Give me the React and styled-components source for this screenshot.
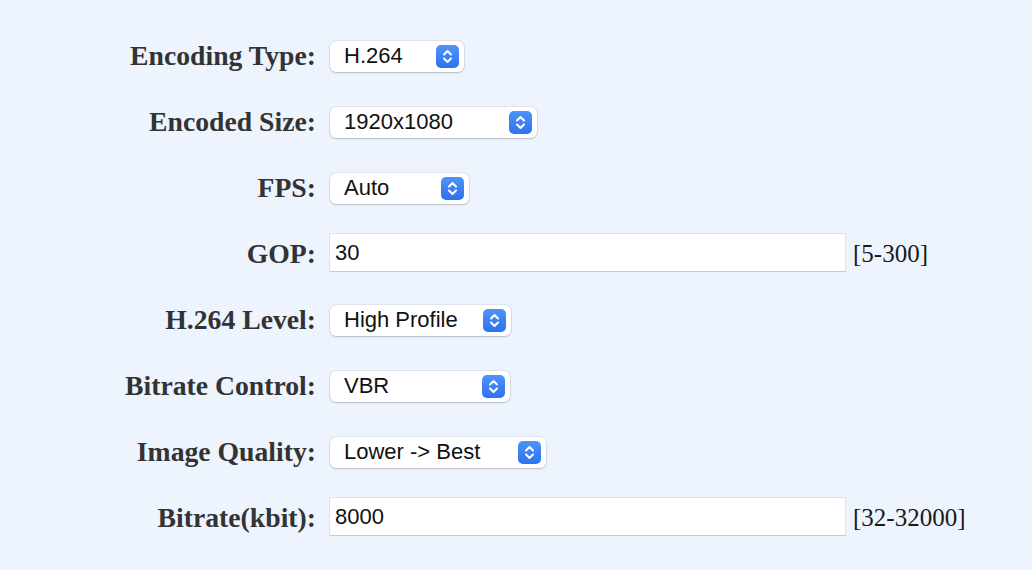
import React from 'react';
import styled, { createGlobalStyle } from 'styled-components';

const GlobalStyle = createGlobalStyle`
  html, body {
    margin: 0;
    padding: 0;
    background-color: #edf4fe;
  }
`;

const Page = styled.div`
  width: 1032px;
  height: 570px;
  background-color: #edf4fe;
  overflow: hidden;
`;

const Form = styled.div`
  display: grid;
  grid-template-columns: 316px 530px auto;
  grid-auto-rows: 66px;
  padding-top: 23px;
  align-items: center;
`;

const Label = styled.label`
  font-family: "Liberation Serif", "Times New Roman", serif;
  font-weight: bold;
  font-size: 27.7px;
  color: #333;
  text-align: right;
  white-space: nowrap;
`;

const Cell = styled.div`
  display: flex;
  align-items: center;
  padding-left: ${(p) => p.$gap || 0}px;
`;

const SelectBox = styled.div`
  box-sizing: border-box;
  width: ${(p) => p.$width}px;
  height: 31px;
  margin-left: 1px;
  padding: 0 5px 0 14px;
  display: flex;
  align-items: center;
  justify-content: space-between;
  background: #fff;
  border-radius: 6px;
  box-shadow: 0 0 0 0.5px rgba(0, 0, 0, 0.12), 0 1px 2px rgba(0, 0, 0, 0.18);
  font-family: "Liberation Sans", Arial, sans-serif;
  font-size: 22px;
  color: #111;
`;

const Arrow = styled.span`
  width: 23px;
  height: 23px;
  border-radius: 5px;
  background: linear-gradient(#4f93f8, #2d72ef);
  display: flex;
  align-items: center;
  justify-content: center;
`;

const TextInput = styled.input`
  box-sizing: border-box;
  flex: none;
  width: 517px;
  height: 39px;
  margin-bottom: 3px;
  padding: 0 5px;
  border: 1px solid #dfe3ea;
  border-bottom-color: #c9c9cc;
  border-radius: 0;
  background: #fff;
  font-family: "Liberation Sans", Arial, sans-serif;
  font-size: 22px;
  color: #111;
  outline: none;
`;

const Range = styled.span`
  font-family: "Liberation Serif", "Times New Roman", serif;
  font-size: 25px;
  color: #1a1a1a;
  white-space: nowrap;
`;

const Chevrons = () => (
  <svg width="23" height="23" viewBox="0 0 23 23" fill="none">
    <path d="M8 9.5 L11.5 6 L15 9.5" stroke="#fff" strokeWidth="2" strokeLinecap="round" strokeLinejoin="round" />
    <path d="M8 13.5 L11.5 17 L15 13.5" stroke="#fff" strokeWidth="2" strokeLinecap="round" strokeLinejoin="round" />
  </svg>
);

const Select = ({ value, width }) => (
  <SelectBox $width={width} role="combobox">
    <span>{value}</span>
    <Arrow><Chevrons /></Arrow>
  </SelectBox>
);

const fields = [
  { label: 'Encoding Type:', type: 'select', value: 'H.264', width: 134 },
  { label: 'Encoded Size:', type: 'select', value: '1920x1080', width: 207 },
  { label: 'FPS:', type: 'select', value: 'Auto', width: 139 },
  { label: 'GOP:', type: 'input', value: '30', range: '[5-300]' },
  { label: 'H.264 Level:', type: 'select', value: 'High Profile', width: 181 },
  { label: 'Bitrate Control:', type: 'select', value: 'VBR', width: 180 },
  { label: 'Image Quality:', type: 'select', value: 'Lower -> Best', width: 216 },
  { label: 'Bitrate(kbit):', type: 'input', value: '8000', range: '[32-32000]' },
];

const App = () => {
  return (
    <Page>
      <GlobalStyle />
      <Form>
        {fields.map((f) => (
          <React.Fragment key={f.label}>
            <Label>{f.label}</Label>
            <Cell $gap={13}>
              {f.type === 'select'
                ? <Select value={f.value} width={f.width} />
                : <TextInput defaultValue={f.value} />}
            </Cell>
            <Cell $gap={7}>{f.range && <Range>{f.range}</Range>}</Cell>
          </React.Fragment>
        ))}
      </Form>
    </Page>
  );
};

export default App;
